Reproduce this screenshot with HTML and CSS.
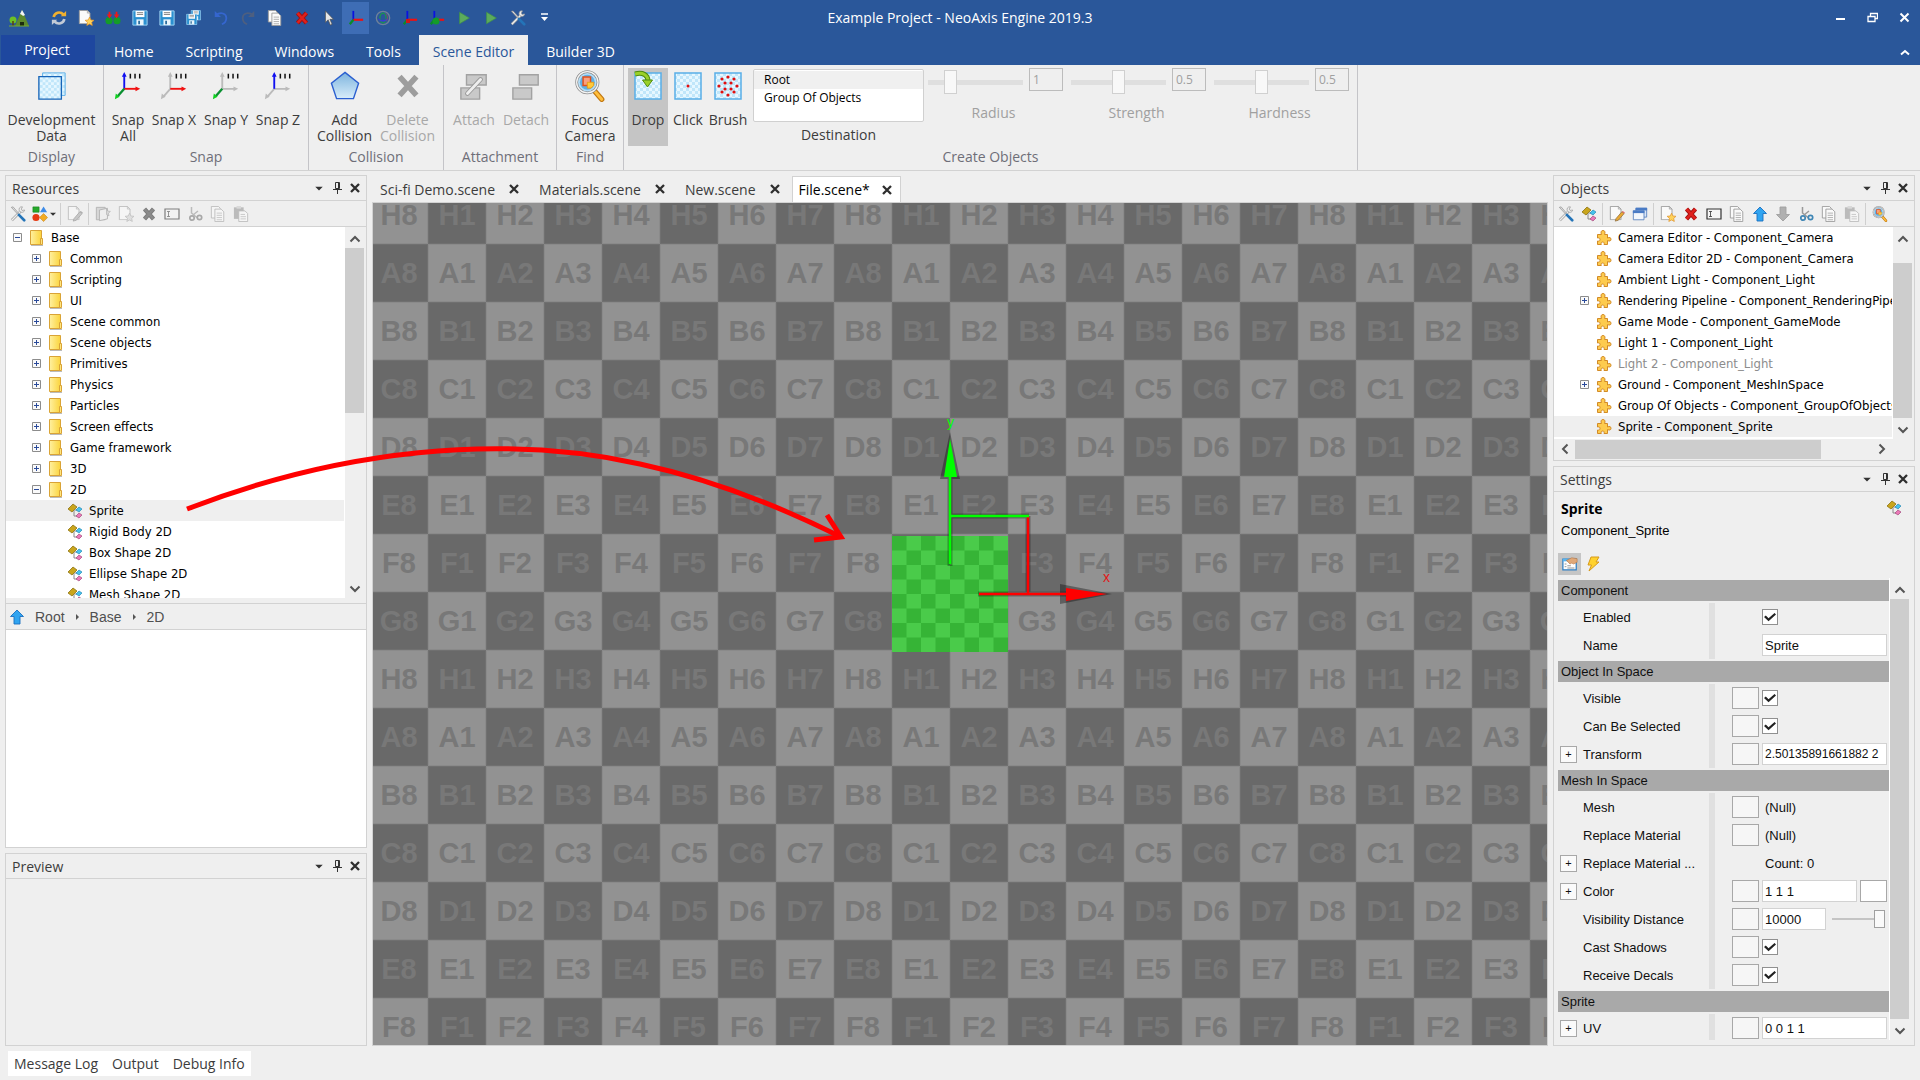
FILE: index.html
```html
<!DOCTYPE html>
<html lang="en">
<head>
    <meta charset="UTF-8">
    <meta name="viewport" content="width=device-width, initial-scale=1.0">
    <title>Example Project - NeoAxis Engine 2019.3</title>
    <link rel="stylesheet" href="styles.css">
</head>
<body>

<!-- Shared icons -->
<svg class="sprites" aria-hidden="true">
    <defs>
        <linearGradient id="folder-fill" x1="0" x2="1"><stop offset="0" stop-color="#fff0a0"/><stop offset="1" stop-color="#fbd43c"/></linearGradient>
        <linearGradient id="blue-fill" x1="0" y1="0" x2="0" y2="1"><stop offset="0" stop-color="#7db4de"/><stop offset="1" stop-color="#d8edfa"/></linearGradient>
        <pattern id="soft-checker" width="6" height="6" patternUnits="userSpaceOnUse"><rect width="6" height="6" fill="#e6f7ff"/><path d="M0 0h3v3H0zM3 3h3v3H3z" fill="#c0e6fa"/></pattern>
        <pattern id="sprite-checker" x="9" y="123" width="29" height="29" patternUnits="userSpaceOnUse"><rect width="29" height="29" fill="#4acb4a"/><path d="M0 0h14.5v14.5H0zM14.5 14.5h14.5v14.5H14.5z" fill="#36b436"/></pattern>
    </defs>
    <symbol id="i-folder" viewBox="0 0 16 16"><path d="M2 15.5h12" stroke="#bbb"/><path d="M1.500 .5h11v14h-11z" fill="url(#folder-fill)" stroke="#d9a336"/><path d="M11.500 8.500h2v6h-2z" fill="#ffe680" stroke="#d9a336"/></symbol>
    <symbol id="i-class" viewBox="0 0 16 16"><path d="M7 7v6h4M8 7h4" fill="none" stroke="#8a8a8a"/><path d="M1 6l5-5 4 3-5 5z" fill="#c9a51c" stroke="#8d7412" stroke-width=".8"/><path d="M9 7l3-3 3 2-3 3z" fill="#45c3ee" stroke="#2a8ab5" stroke-width=".7"/><path d="M9 13l3-3 3 2-3 3z" fill="#ec79b8" stroke="#a34b7e" stroke-width=".7"/></symbol>
    <symbol id="i-puzzle" viewBox="0 0 16 16"><path d="M1.500 4.500h4c-1-2-.5-4 1.500-4s2.500 2 1.500 4h3v3.500c2-1 3.500-.5 3.500 1.300s-1.500 2.200-3.500 1.200v4h-3.500c.5-1.500 0-2.500-1.300-2.500s-2 1-1.400 2.500H1.500v-3.500c1.500.4 2.500-.2 2.500-1.500s-1-1.900-2.500-1.500z" fill="#fdcb4e" stroke="#d28a26"/></symbol>
    <symbol id="i-tools" viewBox="0 0 18 18"><path d="M2 16L12 6" stroke="#999" stroke-width="3"/><path d="M2 16L12 6" stroke="#eee" stroke-width="1.500"/><path d="M16.500 4.500l-3 .5-.8-1.500L14 1c-3-.7-4.500 2-3.500 4.500 2 2.500 5.500 2 6-1z" fill="#eee" stroke="#999" stroke-width=".8"/><path d="M1.500 1.500l2-.5 6 7-1 1z" fill="#ddd" stroke="#888" stroke-width=".7"/><path d="M10 10l6 6" stroke="#2474b8" stroke-width="3" stroke-linecap="round"/></symbol>
    <symbol id="i-shapes" viewBox="0 0 18 18"><path d="M1 1h7v6H1z" fill="#25a92b" stroke="#157a1b" stroke-width=".6"/><path d="M13 .5L17 7H9z" fill="#3d8be8"/><circle cx="4.500" cy="13" r="4" fill="#e63a12"/><path d="M13 8.500l4.500 4.500-4.500 4.500L8.500 13z" fill="#f3ab22" stroke="#c27f13" stroke-width=".6"/></symbol>
    <symbol id="i-page" viewBox="0 0 16 16"><path d="M1.500.5h9l3 3v12h-12z" fill="#fafafa" stroke="#999"/><path d="M10.500.5v3h3z" fill="#ddd" stroke="#999" stroke-width=".7"/></symbol>
    <symbol id="i-pagestar" viewBox="0 0 18 18"><use href="#i-page" width="16" height="16"/><path d="M13 8l1.500 3.200 3.500.4-2.600 2.300.7 3.500-3.100-1.700-3.100 1.700.7-3.500L8 11.600l3.500-.4z" fill="#ffd25a" stroke="#e0922a" stroke-width=".8"/></symbol>
    <symbol id="i-edit" viewBox="0 0 18 18"><use href="#i-page" width="16" height="16"/><path d="M8 14l6.500-7.500 2.500 2L10.500 16 7 17z" fill="#eaa934" stroke="#8a6a3a" stroke-width=".8"/><path d="M14.500 6.500l1-1 2.500 2-1 1z" fill="#e06666"/></symbol>
    <symbol id="i-copy" viewBox="0 0 18 18"><path d="M1.500.5h8l2 2v11h-10z" fill="#fafafa" stroke="#999"/><path d="M5.500 3.500h7l3 3v11h-10z" fill="#fafafa" stroke="#999"/><path d="M7.500 8h6M7.500 10.500h6M7.500 13h6M7.500 15.500h6" stroke="#aaa"/></symbol>
    <symbol id="i-paste" viewBox="0 0 18 18"><path d="M1 1.500h11v13H1z" fill="#999"/><path d="M4 0h5v3H4z" fill="#ccc"/><path d="M6.500 5.500h7l3 3v9h-10z" fill="#fafafa" stroke="#999"/><path d="M8.500 9.500h5M8.500 12h6M8.500 14.500h6" stroke="#aaa"/></symbol>
    <symbol id="i-del" viewBox="0 0 16 16"><path d="M3.500 3l9 10M12.500 3l-9 10" stroke="#a3100f" stroke-width="4.200"/><path d="M3.500 3l9 10M12.500 3l-9 10" stroke="#e0201c" stroke-width="2.600"/></symbol>
    <symbol id="i-rename" viewBox="0 0 16 16"><path d="M1 3h14v10H1z" fill="#f4f4f4" stroke="#333" stroke-width="1.200"/><path d="M3 5.500h3M3 10.500h3M4.500 5.500v5" stroke="#333" stroke-width=".8"/></symbol>
    <symbol id="i-cut" viewBox="0 0 16 16"><path d="M4.500 1v6l6 5M11 5L6 9" fill="none" stroke="#999" stroke-width="1.500"/><circle cx="5" cy="12" r="2.200" fill="none" stroke="#3f86b5" stroke-width="1.700"/><circle cx="12.500" cy="11.500" r="2.200" fill="none" stroke="#3f86b5" stroke-width="1.700"/></symbol>
    <symbol id="i-up" viewBox="0 0 16 16"><path d="M8 1l6.500 6.500H11V15H5V7.500H1.500z" fill="#30a4f0" stroke="#1a6fc0" stroke-width=".9"/></symbol>
    <symbol id="i-down" viewBox="0 0 16 16"><path d="M8 15L1.500 8.500H5V1h6v7.500h3.500z" fill="#b0b0b0" stroke="#a0a0a0" stroke-width=".9"/></symbol>
    <symbol id="i-windows" viewBox="0 0 18 18"><path d="M4.500 2.500h12v10h-12z" fill="#dbe7f7" stroke="#5b83c0"/><path d="M4 2h13v3H4z" fill="#4a7bc5"/><path d="M1.500 5.500h12v10h-12z" fill="#f3f7fc" stroke="#5b83c0"/><path d="M1 5h13v3H1z" fill="#4a7bc5"/></symbol>
    <symbol id="i-find" viewBox="0 0 28 30"><path d="M18.500 20l6.500 7.500" stroke="#c27812" stroke-width="5" stroke-linecap="round"/><path d="M19 20.500l6 7" stroke="#ffbe3c" stroke-width="2.800" stroke-linecap="round"/><circle cx="11.500" cy="11.500" r="10" fill="#b4dcf5" stroke="#8a8a8a" stroke-width="2.600"/><circle cx="11.500" cy="11.500" r="10" fill="none" stroke="#f4f4f4" stroke-width="1.200"/><circle cx="11.500" cy="11.500" r="7" fill="#5fb0e6"/><path d="M7.500 6.500h7v8h-7z" fill="#f8a080" stroke="#e0501c" stroke-width="1.400"/><path d="M11.500 11.500h6v3l-2.500 2.500h-3.500z" fill="#ffc93a" stroke="#e89a10" stroke-width=".8"/></symbol>
    <symbol id="i-save" viewBox="0 0 18 18"><path d="M1 1h16v16H1z" fill="#2b90d0" stroke="#a8dcf8"/><path d="M4 1h10v7H4z" fill="#fff"/><path d="M5.500 3h7M5.500 5h7" stroke="#777"/><path d="M5 10.500h8V17H5z" fill="#e8f4fb"/><path d="M7 12h2v4H7z" fill="#2b6c9c"/></symbol>
    <symbol id="i-saveall" viewBox="0 0 18 18"><use href="#i-save" x="5" width="12" height="12"/><use href="#i-save" y="4" width="13" height="13"/></symbol>
    <symbol id="i-gizmo" viewBox="0 0 18 18"><path d="M6 1v11" stroke="#0a12e0" stroke-width="2"/><path d="M6 11h11" stroke="#f01010" stroke-width="2.400"/><path d="M6 11l-4 5" stroke="#0b8a2a" stroke-width="2.600"/></symbol>
    <symbol id="i-play" viewBox="0 0 18 18"><path d="M4 2.500l11 6.500-11 6.500z" fill="#5cab5c" stroke="#3f9148" stroke-width=".8"/></symbol>
    <symbol id="i-undo" viewBox="0 0 18 18"><path d="M3 6c6-4.500 12-2 12 3 0 4-2 6-5 7" fill="none" stroke="#3566cf" stroke-width="2"/><path d="M2 1v7h7z" fill="#3566cf"/></symbol>
    <symbol id="i-min-arrow" viewBox="0 0 9 6"><path d="M0 1h9L4.500 5.500z" fill="#333"/></symbol>
    <symbol id="i-pin" viewBox="0 0 9 13"><path d="M2.500.5h4v6h-4zM5.500.5v6M0 7.500h9M4.500 7.500V12" fill="none" stroke="#333"/></symbol>
    <symbol id="i-x" viewBox="0 0 10 10"><path d="M1 1l8 8M9 1L1 9" stroke="#2e2e2e" stroke-width="2.300"/></symbol>
    <symbol id="i-cup" viewBox="0 0 12 8"><path d="M1.500 6.500L6 2l4.500 4.500" fill="none" stroke="#555" stroke-width="2"/></symbol>
    <symbol id="i-cdown" viewBox="0 0 12 8"><path d="M1.500 1.500L6 6l4.500-4.500" fill="none" stroke="#555" stroke-width="2"/></symbol>
    <symbol id="i-plus" viewBox="0 0 9 9"><path d="M.5.5h8v8h-8z" fill="#fafafa" stroke="#8c8c8c"/><path d="M2 4.500h5M4.500 2v5" stroke="#2a4a9a"/></symbol>
    <symbol id="i-minus" viewBox="0 0 9 9"><path d="M.5.5h8v8h-8z" fill="#fafafa" stroke="#8c8c8c"/><path d="M2 4.500h5" stroke="#2a4a9a"/></symbol>
    <symbol id="i-tile" viewBox="0 0 28 32"><path d="M1 3h26v26H1z" fill="url(#soft-checker)" stroke="#58aee8" stroke-width="1.500"/></symbol>
</svg>

<header class="titlebar">
    <div class="quick">
        <button class="qb logo" title="NeoAxis"><svg viewBox="0 0 20 18"><path d="M6 17L13 1l7 16z" fill="#5d8a2e"/><path d="M11 5l2-4 3 5-2 1-1-1z" fill="#f4f4f4"/><circle cx="4" cy="11" r="3.500" fill="#6cc024"/><path d="M4 12v5" stroke="#5a3a12" stroke-width="1.500"/><path d="M11 17v-4h4v4z" fill="#1c2c10"/><path d="M0 16.500h20v1H0z" fill="#77ad30"/></svg></button>
        <button class="qb" title="Refresh"><svg viewBox="0 0 18 18"><path d="M3 8c1-5 7-7 11-3" fill="none" stroke="#f0b030" stroke-width="3"/><path d="M11 7h6V1z" fill="#f0b030"/><path d="M15 10c-1 5-7 7-11 3" fill="none" stroke="#c2cad6" stroke-width="3"/><path d="M7 11H1v6z" fill="#c2cad6"/></svg></button>
        <button class="qb" title="New"><svg><use href="#i-pagestar"/></svg></button>
        <button class="qb" title="Import"><svg viewBox="0 0 18 18"><path d="M5 2v5M13 2v5" stroke="#f01818" stroke-width="2"/><circle cx="4.500" cy="12" r="4" fill="#149c28"/><circle cx="13.500" cy="12" r="4" fill="#149c28"/><path d="M2 5h6l-3 4.500zM10 5h6l-3 4.500z" fill="#f01818"/></svg></button>
        <button class="qb" title="Save"><svg><use href="#i-save"/></svg></button>
        <button class="qb" title="Save as"><svg><use href="#i-save"/></svg></button>
        <button class="qb" title="Save all"><svg><use href="#i-saveall"/></svg></button>
        <button class="qb" title="Undo"><svg><use href="#i-undo"/></svg></button>
        <button class="qb" title="Redo"><svg viewBox="0 0 18 18"><path d="M15 6C9 1.500 3 4 3 9c0 4 2 6 5 7" fill="none" stroke="#4d5f80" stroke-width="2"/><path d="M16 1v7H9z" fill="#4d5f80"/></svg></button>
        <button class="qb" title="Duplicate"><svg><use href="#i-copy"/></svg></button>
        <button class="qb" title="Delete"><svg><use href="#i-del"/></svg></button>
        <button class="qb" title="Select"><svg viewBox="0 0 18 18"><path d="M5 1v13l3-3 2.500 6 2-1L10 10.500h4z" fill="#e6e6e6" stroke="#555" stroke-width=".8"/></svg></button>
        <button class="qb active" title="Move"><svg><use href="#i-gizmo"/></svg></button>
        <button class="qb" title="Rotate"><svg viewBox="0 0 18 18"><circle cx="9" cy="9" r="7.500" fill="none" stroke="#6f8199" stroke-width="1.500"/><ellipse cx="9" cy="9" rx="3.500" ry="5.500" fill="none" stroke="#1b9a4a" stroke-width="1.300"/><path d="M4 10c2 3 8 3 10 0" fill="none" stroke="#3a3ad8" stroke-width="1.300"/><path d="M12 4c2 2 3 5 1 8" fill="none" stroke="#8b4a6a"/></svg></button>
        <button class="qb" title="Scale"><svg><use href="#i-gizmo"/><rect x="4" y="9" width="4" height="4" fill="#d01818"/></svg></button>
        <button class="qb" title="Transform"><svg><use href="#i-gizmo"/><circle cx="7" cy="11" r="3.500" fill="#149c28"/></svg></button>
        <button class="qb" title="Play"><svg><use href="#i-play"/></svg></button>
        <button class="qb" title="Run device"><svg><use href="#i-play"/></svg></button>
        <button class="qb" title="Tools"><svg><use href="#i-tools"/></svg></button>
        <button class="qb customize" title="Customize"><svg viewBox="0 0 9 9"><path d="M1 1h7" stroke="#fff" stroke-width="1.500"/><path d="M1 4h7L4.500 8z" fill="#fff"/></svg></button>
    </div>
    <h1 class="app-title">Example Project - NeoAxis Engine 2019.3</h1>
    <div class="window-buttons">
        <button title="Minimize"><svg viewBox="0 0 11 11"><path d="M1 7h9" stroke="#fff" stroke-width="2"/></svg></button>
        <button title="Restore"><svg viewBox="0 0 11 11"><path d="M1 4.500h7v5H1zM3.500 4V1.500h7v5H8" fill="none" stroke="#fff" stroke-width="1.300"/></svg></button>
        <button title="Close"><svg viewBox="0 0 11 11"><path d="M1.500 1.500l8 8M9.500 1.500l-8 8" stroke="#fff" stroke-width="2"/></svg></button>
    </div>
</header>

<nav class="ribbon-tabs">
    <a href="#" class="project">Project</a>
    <a href="#">Home</a>
    <a href="#">Scripting</a>
    <a href="#">Windows</a>
    <a href="#">Tools</a>
    <a href="#" class="selected">Scene Editor</a>
    <a href="#">Builder 3D</a>
    <button class="collapse" title="Collapse ribbon"><svg viewBox="0 0 10 7"><path d="M1 5.500l4-3.500 4 3.500" fill="none" stroke="#fff" stroke-width="2"/></svg></button>
</nav>

<section class="ribbon">
    <div class="group g-display">
        <div class="items"><button class="rb"><svg viewBox="0 0 32 32"><path d="M6 2h24v24H6z" fill="url(#soft-checker)" stroke="#58aee8"/><path d="M2 6h24v24H2z" fill="url(#soft-checker)" stroke="#1664b8" stroke-width="1.400"/></svg><span>Development<br>Data</span></button></div>
        <div class="caption">Display</div>
    </div>
    <div class="group g-snap">
        <div class="items">
            <button class="rb"><svg viewBox="0 0 32 32"><path d="M12 19V4" stroke="#1010f0" stroke-width="2"/><path d="M9.500 6L12 1l2.500 5z" fill="#1010f0"/><path d="M12 19h13" stroke="#f01010" stroke-width="2"/><path d="M24 16.500l5 2.500-5 2.500z" fill="#f01010"/><path d="M12 19l-7 8" stroke="#0a9030" stroke-width="2.500"/><path d="M2 30l1-6 4 3.500z" fill="#10d020"/><path d="M18.500 3v5M23.500 3v5M28.500 3v5" stroke="#111" stroke-width="1.600"/></svg><span>Snap<br>All</span></button>
            <button class="rb"><svg viewBox="0 0 32 32"><path d="M12 19V4M12 19l-7 8" stroke="#bbb" stroke-width="2"/><path d="M9.500 6L12 1l2.500 5zM2 30l1-6 4 3.500z" fill="#bbb"/><path d="M12 19h13" stroke="#f01010" stroke-width="2"/><path d="M24 16.500l5 2.500-5 2.500z" fill="#f01010"/><path d="M18.500 3v5M23.500 3v5M28.500 3v5" stroke="#111" stroke-width="1.600"/></svg><span>Snap X</span></button>
            <button class="rb"><svg viewBox="0 0 32 32"><path d="M12 19V4M12 19h13" stroke="#bbb" stroke-width="2"/><path d="M9.500 6L12 1l2.500 5zM24 16.500l5 2.500-5 2.500z" fill="#bbb"/><path d="M12 19l-7 8" stroke="#0a9030" stroke-width="2.500"/><path d="M2 30l1-6 4 3.500z" fill="#10d020"/><path d="M18.500 3v5M23.500 3v5M28.500 3v5" stroke="#111" stroke-width="1.600"/></svg><span>Snap Y</span></button>
            <button class="rb"><svg viewBox="0 0 32 32"><path d="M12 19h13M12 19l-7 8" stroke="#bbb" stroke-width="2"/><path d="M24 16.500l5 2.500-5 2.500zM2 30l1-6 4 3.500z" fill="#bbb"/><path d="M12 19V4" stroke="#1010f0" stroke-width="2"/><path d="M9.500 6L12 1l2.500 5z" fill="#1010f0"/><path d="M18.500 3v5M23.500 3v5M28.500 3v5" stroke="#111" stroke-width="1.600"/></svg><span>Snap Z</span></button>
        </div>
        <div class="caption">Snap</div>
    </div>
    <div class="group g-collision">
        <div class="items">
            <button class="rb"><svg viewBox="0 0 32 32"><path d="M16 1.500L30.500 13 25 29.500H7L1.500 13z" fill="url(#blue-fill)" stroke="#2a5fd0" stroke-width="1.500"/></svg><span>Add<br>Collision</span></button>
            <button class="rb" disabled><svg viewBox="0 0 32 32"><path d="M7 6l18 20M25 6L7 26" stroke="#9d9d9d" stroke-width="6"/></svg><span>Delete<br>Collision</span></button>
        </div>
        <div class="caption">Collision</div>
    </div>
    <div class="group g-attach">
        <div class="items">
            <button class="rb" disabled><svg viewBox="0 0 32 32"><path d="M8 4h21v11H8zM2 18h20v12H2z" fill="#c9c9c9" stroke="#a2a2a2" stroke-width="1.500"/><path d="M9 24L23 9" stroke="#999" stroke-width="5" stroke-linecap="round"/><path d="M9 24L23 9" stroke="#eee" stroke-width="3" stroke-linecap="round"/></svg><span>Attach</span></button>
            <button class="rb" disabled><svg viewBox="0 0 32 32"><path d="M9 4h20v11H9zM2 18h20v12H2z" fill="#c9c9c9" stroke="#a2a2a2" stroke-width="1.500"/></svg><span>Detach</span></button>
        </div>
        <div class="caption">Attachment</div>
    </div>
    <div class="group g-find">
        <div class="items"><button class="rb"><svg><use href="#i-find"/></svg><span>Focus<br>Camera</span></button></div>
        <div class="caption">Find</div>
    </div>
    <div class="group g-create">
        <div class="items">
            <button class="rb pressed"><svg viewBox="0 0 28 32"><use href="#i-tile"/><path d="M1 4c8-2 13 1 13 7" fill="none" stroke="#4d8a10" stroke-width="5"/><path d="M1 4c8-2 13 1 13 7" fill="none" stroke="#9ad028" stroke-width="3"/><path d="M8.500 10h10l-5 7z" fill="#9ad028" stroke="#4d8a10"/></svg><span>Drop</span></button>
            <button class="rb"><svg viewBox="0 0 28 32"><use href="#i-tile"/><circle cx="14" cy="16" r="1.500" fill="#e01010"/></svg><span>Click</span></button>
            <button class="rb"><svg viewBox="0 0 28 32"><use href="#i-tile"/><g fill="#e01010"><circle cx="14" cy="7" r="1.600"/><circle cx="14" cy="25" r="1.600"/><circle cx="5" cy="16" r="1.600"/><circle cx="23" cy="16" r="1.600"/><circle cx="8" cy="9" r="1.600"/><circle cx="20" cy="9" r="1.600"/><circle cx="8" cy="22" r="1.600"/><circle cx="20" cy="22" r="1.600"/><circle cx="11" cy="13" r="1.600"/><circle cx="17" cy="13" r="1.600"/><circle cx="11" cy="19" r="1.600"/><circle cx="17" cy="19" r="1.600"/></g></svg><span>Brush</span></button>
            <div class="destination">
                <select id="destination" size="2">
                    <option selected>Root</option>
                    <option>Group Of Objects</option>
                </select>
                <label for="destination">Destination</label>
            </div>
            <div class="param">
                <div class="param-row"><input type="range" id="radius" min="0" max="10" value="2" disabled><input type="text" value="1" aria-label="Radius value" disabled></div>
                <label for="radius">Radius</label>
            </div>
            <div class="param">
                <div class="param-row"><input type="range" id="strength" min="0" max="10" value="5" disabled><input type="text" value="0.5" aria-label="Strength value" disabled></div>
                <label for="strength">Strength</label>
            </div>
            <div class="param">
                <div class="param-row"><input type="range" id="hardness" min="0" max="10" value="5" disabled><input type="text" value="0.5" aria-label="Hardness value" disabled></div>
                <label for="hardness">Hardness</label>
            </div>
        </div>
        <div class="caption">Create Objects</div>
    </div>
</section>

<main class="workspace">

    <div class="dock">
        <section class="panel resources">
            <div class="panel-head">
                <h2>Resources</h2>
                <button title="Options"><svg class="arr"><use href="#i-min-arrow"/></svg></button>
                <button title="Pin"><svg class="pin"><use href="#i-pin"/></svg></button>
                <button title="Close"><svg class="x"><use href="#i-x"/></svg></button>
            </div>
            <div class="toolbar">
                <button title="Options"><svg><use href="#i-tools"/></svg></button>
                <button class="wide" title="Display mode"><svg><use href="#i-shapes"/></svg><svg class="caret"><use href="#i-min-arrow"/></svg></button>
                <span class="sep"></span>
                <button title="Edit" disabled><svg><use href="#i-edit"/></svg></button>
                <span class="sep"></span>
                <button title="New folder" disabled><svg viewBox="0 0 18 18"><path d="M1.500 1.500h10v14h-10z" fill="#c8c8c8" stroke="#888"/><path d="M5 4.500l9-2v12l-9 2z" fill="#eee" stroke="#888"/><path d="M13 3l1.300 2.700 3 .4-2.200 2 .6 3-2.700-1.500z" fill="#ccc" stroke="#888" stroke-width=".8"/></svg></button>
                <button title="New resource" disabled><svg><use href="#i-pagestar"/></svg></button>
                <button title="Delete" disabled><svg><use href="#i-del"/></svg></button>
                <button title="Rename" disabled><svg><use href="#i-rename"/></svg></button>
                <button title="Cut" disabled><svg><use href="#i-cut"/></svg></button>
                <button title="Copy" disabled><svg><use href="#i-copy"/></svg></button>
                <button title="Paste" disabled><svg><use href="#i-paste"/></svg></button>
            </div>
            <div class="scroll-area">
                <ul class="tree">
                    <li class="l0"><svg class="exp"><use href="#i-minus"/></svg><svg class="ico"><use href="#i-folder"/></svg>Base</li>
                    <li class="l1"><svg class="exp"><use href="#i-plus"/></svg><svg class="ico"><use href="#i-folder"/></svg>Common</li>
                    <li class="l1"><svg class="exp"><use href="#i-plus"/></svg><svg class="ico"><use href="#i-folder"/></svg>Scripting</li>
                    <li class="l1"><svg class="exp"><use href="#i-plus"/></svg><svg class="ico"><use href="#i-folder"/></svg>UI</li>
                    <li class="l1"><svg class="exp"><use href="#i-plus"/></svg><svg class="ico"><use href="#i-folder"/></svg>Scene common</li>
                    <li class="l1"><svg class="exp"><use href="#i-plus"/></svg><svg class="ico"><use href="#i-folder"/></svg>Scene objects</li>
                    <li class="l1"><svg class="exp"><use href="#i-plus"/></svg><svg class="ico"><use href="#i-folder"/></svg>Primitives</li>
                    <li class="l1"><svg class="exp"><use href="#i-plus"/></svg><svg class="ico"><use href="#i-folder"/></svg>Physics</li>
                    <li class="l1"><svg class="exp"><use href="#i-plus"/></svg><svg class="ico"><use href="#i-folder"/></svg>Particles</li>
                    <li class="l1"><svg class="exp"><use href="#i-plus"/></svg><svg class="ico"><use href="#i-folder"/></svg>Screen effects</li>
                    <li class="l1"><svg class="exp"><use href="#i-plus"/></svg><svg class="ico"><use href="#i-folder"/></svg>Game framework</li>
                    <li class="l1"><svg class="exp"><use href="#i-plus"/></svg><svg class="ico"><use href="#i-folder"/></svg>3D</li>
                    <li class="l1"><svg class="exp"><use href="#i-minus"/></svg><svg class="ico"><use href="#i-folder"/></svg>2D</li>
                    <li class="l2 current"><svg class="ico"><use href="#i-class"/></svg>Sprite</li>
                    <li class="l2"><svg class="ico"><use href="#i-class"/></svg>Rigid Body 2D</li>
                    <li class="l2"><svg class="ico"><use href="#i-class"/></svg>Box Shape 2D</li>
                    <li class="l2"><svg class="ico"><use href="#i-class"/></svg>Ellipse Shape 2D</li>
                    <li class="l2"><svg class="ico"><use href="#i-class"/></svg>Mesh Shape 2D</li>
                </ul>
                <div class="vscroll">
                    <button title="Scroll up"><svg><use href="#i-cup"/></svg></button>
                    <div class="track"><div class="thumb thumb-res"></div></div>
                    <button title="Scroll down"><svg><use href="#i-cdown"/></svg></button>
                </div>
            </div>
            <div class="breadcrumbs">
                <svg class="ico"><use href="#i-up"/></svg>
                <a href="#">Root</a><span class="crumb"></span><a href="#">Base</a><span class="crumb"></span><a href="#">2D</a>
            </div>
            <div class="file-list"></div>
        </section>

        <section class="panel preview">
            <div class="panel-head">
                <h2>Preview</h2>
                <button title="Options"><svg class="arr"><use href="#i-min-arrow"/></svg></button>
                <button title="Pin"><svg class="pin"><use href="#i-pin"/></svg></button>
                <button title="Close"><svg class="x"><use href="#i-x"/></svg></button>
            </div>
        </section>
    </div>

    <div class="documents">
        <div class="doc-tabs">
            <div class="doc-tab"><a href="#">Sci-fi Demo.scene</a><button title="Close"><svg class="x"><use href="#i-x"/></svg></button></div>
            <div class="doc-tab"><a href="#">Materials.scene</a><button title="Close"><svg class="x"><use href="#i-x"/></svg></button></div>
            <div class="doc-tab"><a href="#">New.scene</a><button title="Close"><svg class="x"><use href="#i-x"/></svg></button></div>
            <div class="doc-tab open"><a href="#">File.scene*</a><button title="Close"><svg class="x"><use href="#i-x"/></svg></button></div>
        </div>
        <div class="scene">
            <div class="floor" id="floor"></div>
            <svg class="gizmo" viewBox="0 0 240 240" width="240" height="240">
                <rect x="9" y="123" width="116" height="116" fill="url(#sprite-checker)"/>
                <g stroke="#000" stroke-opacity=".3" fill="none" stroke-width="5"><path d="M67 153V66M67 103h79M145 103v80M95 181h90"/></g>
                <path d="M67 19L57 66h20zM229 181l-52-10v20z" fill="#000" fill-opacity=".35"/>
                <path d="M67 151V62" stroke="#0f0" stroke-width="2.500"/>
                <path d="M67 26L61 64h13z" fill="#0f0"/>
                <path d="M145 103v77" stroke="#f00" stroke-width="2.500"/>
                <path d="M67 103h79" stroke="#0f0" stroke-width="2.500"/>
                <path d="M96 181h90" stroke="#f00" stroke-width="2.500"/>
                <path d="M224 181l-41-6v13z" fill="#f00"/>
                <text x="64" y="14" fill="#0f0">y</text>
                <text x="220" y="169" fill="#e01818">x</text>
            </svg>
        </div>
    </div>

    <div class="dock">
        <section class="panel objects">
            <div class="panel-head">
                <h2>Objects</h2>
                <button title="Options"><svg class="arr"><use href="#i-min-arrow"/></svg></button>
                <button title="Pin"><svg class="pin"><use href="#i-pin"/></svg></button>
                <button title="Close"><svg class="x"><use href="#i-x"/></svg></button>
            </div>
            <div class="toolbar">
                <button title="Options"><svg><use href="#i-tools"/></svg></button>
                <button title="Show types"><svg><use href="#i-class"/></svg></button>
                <span class="sep"></span>
                <button title="Edit"><svg><use href="#i-edit"/></svg></button>
                <button title="Settings window"><svg><use href="#i-windows"/></svg></button>
                <span class="sep"></span>
                <button title="New object"><svg><use href="#i-pagestar"/></svg></button>
                <button title="Delete"><svg><use href="#i-del"/></svg></button>
                <button title="Rename"><svg><use href="#i-rename"/></svg></button>
                <button title="Clone"><svg><use href="#i-copy"/></svg></button>
                <button title="Move up"><svg><use href="#i-up"/></svg></button>
                <button title="Move down"><svg><use href="#i-down"/></svg></button>
                <button title="Cut"><svg><use href="#i-cut"/></svg></button>
                <button title="Copy"><svg><use href="#i-copy"/></svg></button>
                <button title="Paste" disabled><svg><use href="#i-paste"/></svg></button>
                <span class="sep"></span>
                <button title="Find"><svg><use href="#i-find"/></svg></button>
            </div>
            <div class="scroll-area">
                <ul class="tree">
                    <li class="o1"><svg class="ico"><use href="#i-puzzle"/></svg>Camera Editor - Component_Camera</li>
                    <li class="o1"><svg class="ico"><use href="#i-puzzle"/></svg>Camera Editor 2D - Component_Camera</li>
                    <li class="o1"><svg class="ico"><use href="#i-puzzle"/></svg>Ambient Light - Component_Light</li>
                    <li class="o0"><svg class="exp"><use href="#i-plus"/></svg><svg class="ico"><use href="#i-puzzle"/></svg>Rendering Pipeline - Component_RenderingPipeline</li>
                    <li class="o1"><svg class="ico"><use href="#i-puzzle"/></svg>Game Mode - Component_GameMode</li>
                    <li class="o1"><svg class="ico"><use href="#i-puzzle"/></svg>Light 1 - Component_Light</li>
                    <li class="o1 off"><svg class="ico"><use href="#i-puzzle"/></svg>Light 2 - Component_Light</li>
                    <li class="o0"><svg class="exp"><use href="#i-plus"/></svg><svg class="ico"><use href="#i-puzzle"/></svg>Ground - Component_MeshInSpace</li>
                    <li class="o1"><svg class="ico"><use href="#i-puzzle"/></svg>Group Of Objects - Component_GroupOfObjects</li>
                    <li class="o1 current"><svg class="ico"><use href="#i-puzzle"/></svg>Sprite - Component_Sprite</li>
                </ul>
                <div class="vscroll">
                    <button title="Scroll up"><svg><use href="#i-cup"/></svg></button>
                    <div class="track"><div class="thumb thumb-obj"></div></div>
                    <button title="Scroll down"><svg><use href="#i-cdown"/></svg></button>
                </div>
            </div>
            <div class="hscroll">
                <button title="Scroll left"><svg viewBox="0 0 8 12"><path d="M6.500 1.500L2 6l4.500 4.500" fill="none" stroke="#555" stroke-width="2"/></svg></button>
                <div class="track"><div class="thumb"></div></div>
                <button title="Scroll right"><svg viewBox="0 0 8 12"><path d="M1.500 1.500L6 6l-4.500 4.500" fill="none" stroke="#555" stroke-width="2"/></svg></button>
            </div>
        </section>

        <section class="panel settings">
            <div class="panel-head">
                <h2>Settings</h2>
                <button title="Options"><svg class="arr"><use href="#i-min-arrow"/></svg></button>
                <button title="Pin"><svg class="pin"><use href="#i-pin"/></svg></button>
                <button title="Close"><svg class="x"><use href="#i-x"/></svg></button>
            </div>
            <div class="subject">
                <div>
                    <h3>Sprite</h3>
                    <p>Component_Sprite</p>
                </div>
                <svg class="ico"><use href="#i-class"/></svg>
            </div>
            <div class="modes">
                <button class="on" title="Properties"><svg viewBox="0 0 18 16"><path d="M1 2.500h15v12H1z" fill="#fff" stroke="#2f7fc4" stroke-width="1.400"/><path d="M1 2h7v3H1z" fill="#59b4ee"/><path d="M5 4l6-3 6 1v4l-4 2-2-1-2 1z" fill="#e0a878" stroke="#b4703a" stroke-width=".6"/><path d="M3 8h2M3 11h2M6 10h4M6 12.500h8" stroke="#888"/></svg></button>
                <button title="Events"><svg viewBox="0 0 16 16"><path d="M6 1h8l-3 5h3L4 15l2.500-6H3z" fill="#ffd22e" stroke="#d79a1c"/></svg></button>
            </div>
            <div class="scroll-area props-area">
                <form class="props">
                    <h4>Component</h4>
                    <div class="rows">
                        <div class="row"><label for="p-enabled">Enabled</label><i></i><input class="value" type="checkbox" id="p-enabled" checked></div>
                        <div class="row"><label for="p-name">Name</label><i></i><input class="value" type="text" id="p-name" value="Sprite"></div>
                    </div>
                    <h4>Object In Space</h4>
                    <div class="rows">
                        <div class="row"><label for="p-visible">Visible</label><i></i><button type="button" class="def" title="Default"></button><input class="value" type="checkbox" id="p-visible" checked></div>
                        <div class="row"><label for="p-sel">Can Be Selected</label><i></i><button type="button" class="def" title="Default"></button><input class="value" type="checkbox" id="p-sel" checked></div>
                        <div class="row"><button type="button" class="more">+</button><label for="p-tr">Transform</label><i></i><button type="button" class="def" title="Default"></button><input class="value" type="text" id="p-tr" value="2.50135891661882 2"></div>
                    </div>
                    <h4>Mesh In Space</h4>
                    <div class="rows">
                        <div class="row"><span class="name">Mesh</span><i></i><button type="button" class="def" title="Default"></button><span class="value plain">(Null)</span></div>
                        <div class="row"><span class="name">Replace Material</span><i></i><button type="button" class="def" title="Default"></button><span class="value plain">(Null)</span></div>
                        <div class="row"><button type="button" class="more">+</button><span class="name">Replace Material ...</span><i></i><span class="value plain">Count: 0</span></div>
                        <div class="row"><button type="button" class="more">+</button><label for="p-color">Color</label><i></i><button type="button" class="def" title="Default"></button><div class="value pair"><input type="text" id="p-color" value="1 1 1"><button type="button" class="def white" title="Pick color"></button></div></div>
                        <div class="row"><label for="p-vis">Visibility Distance</label><i></i><button type="button" class="def" title="Default"></button><div class="value pair"><input type="text" id="p-vis" value="10000"><input type="range" value="100" aria-label="Visibility Distance"></div></div>
                        <div class="row"><label for="p-shadow">Cast Shadows</label><i></i><button type="button" class="def" title="Default"></button><input class="value" type="checkbox" id="p-shadow" checked></div>
                        <div class="row"><label for="p-decal">Receive Decals</label><i></i><button type="button" class="def" title="Default"></button><input class="value" type="checkbox" id="p-decal" checked></div>
                    </div>
                    <h4>Sprite</h4>
                    <div class="rows">
                        <div class="row"><button type="button" class="more">+</button><label for="p-uv">UV</label><i></i><button type="button" class="def" title="Default"></button><input class="value" type="text" id="p-uv" value="0 0 1 1"></div>
                    </div>
                </form>
                <div class="vscroll">
                    <button title="Scroll up"><svg><use href="#i-cup"/></svg></button>
                    <div class="track"><div class="thumb thumb-set"></div></div>
                    <button title="Scroll down"><svg><use href="#i-cdown"/></svg></button>
                </div>
            </div>
        </section>
    </div>

    <!-- Drag hint: Sprite resource into the scene -->
    <svg class="drag-arrow" width="700" height="140" viewBox="170 420 700 140">
        <path d="M187 509C340 450 500 433 640 464C710 479 775 504 841 537" fill="none" stroke="#f00" stroke-width="5"/>
        <path d="M827 515l14 22-27 3" fill="none" stroke="#f00" stroke-width="5"/>
    </svg>
</main>

<footer class="bottom-bar">
    <nav>
        <a href="#">Message Log</a>
        <a href="#">Output</a>
        <a href="#">Debug Info</a>
    </nav>
</footer>

<script src="floor.js"></script>
</body>
</html>
```

FILE: floor.js
```js
// Fill the scene floor with the 8x8 test texture, repeated
const floor = document.getElementById('floor');
const letters = 'HABCDEFG';
const rows = 15;
const cols = 21;

for (let r = 0; r < rows; r++) {
    for (let c = 0; c < cols; c++) {
        const cell = document.createElement('span');
        cell.className = (r + c) % 2 ? 'dark' : 'light';
        cell.textContent = letters[r % 8] + ((c + 7) % 8 + 1);
        floor.appendChild(cell);
    }
}
```

FILE: styles.css
```css
* {
    box-sizing: border-box;
}
body {
    margin: 0;
    height: 100vh;
    display: flex;
    flex-direction: column;
    overflow: hidden;
    background-color: #efefef;
    color: #3c3c3c;
    font-family: "Open Sans", "Noto Sans", sans-serif;
    font-size: 14px;
}
h1, h2, h3, h4, p, ul {
    margin: 0;
    padding: 0;
    font-weight: normal;
}
button {
    border: 0;
    padding: 0;
    background: none;
    color: inherit;
    font: inherit;
}
a {
    color: inherit;
    text-decoration: none;
}
.sprites {
    position: absolute;
    width: 0;
    height: 0;
}

/* Title bar */
.titlebar {
    display: grid;
    grid-template-columns: 1fr auto 1fr;
    height: 35px;
    align-items: center;
    background-color: #2a579a;
    color: white;
}
.quick {
    display: flex;
    padding-left: 5px;
}
.qb {
    width: 27px;
    height: 32px;
    display: flex;
    align-items: center;
    justify-content: center;
}
.qb svg {
    width: 16px;
    height: 16px;
}
.qb.logo {
    margin-right: 13px;
}
.qb.logo svg {
    width: 20px;
    height: 18px;
}
.qb.active {
    background-color: #3e6db5;
}
.qb.customize svg {
    width: 9px;
    height: 9px;
}
.app-title {
    font-size: 14px;
}
.window-buttons {
    display: flex;
    justify-content: flex-end;
    padding-right: 7px;
}
.window-buttons button {
    width: 32px;
    height: 32px;
}
.window-buttons button:last-child {
    width: 18px;
    margin-left: 7px;
}
.window-buttons svg {
    width: 11px;
    height: 11px;
}

/* Ribbon tabs */
.ribbon-tabs {
    display: flex;
    height: 30px;
    padding-left: 1px;
    background-color: #2a579a;
    color: white;
}
.ribbon-tabs a {
    line-height: 33px;
    padding: 0 14px;
    margin-right: 4px;
}
.ribbon-tabs .project {
    width: 94px;
    padding: 0 2px 0 0;
    margin-right: 5px;
    line-height: 29px;
    text-align: center;
    background-color: #1e479f;
}
.ribbon-tabs .selected {
    background-color: #efefef;
    color: #2a579a;
}
.collapse {
    margin-left: auto;
    width: 30px;
}
.collapse svg {
    width: 10px;
    height: 7px;
}

/* Ribbon */
.ribbon {
    display: flex;
    height: 106px;
    border-bottom: 1px solid #d2d2d2;
}
.group {
    display: flex;
    flex-direction: column;
    padding: 3px 4px 0;
    border-right: 1px solid #c4c4c8;
}
.items {
    display: flex;
    height: 78px;
}
.rb {
    display: flex;
    flex-direction: column;
    align-items: center;
    justify-content: flex-start;
    width: 52px;
    line-height: 16px;
    white-space: nowrap;
}
.rb svg {
    width: 30px;
    height: 32px;
    margin: 2px 0 10px;
    flex-shrink: 0;
}
.rb:disabled {
    color: #a8a8a8;
}
.rb.pressed {
    background-color: #c5c5c5;
}
.caption {
    text-align: center;
    color: #6e6e78;
    line-height: 22px;
}
.g-display {
    width: 104px;
}
.g-display .rb {
    width: 100%;
}
.g-snap .rb:first-child {
    width: 40px;
}
.g-collision .rb {
    width: 63px;
}
.g-find .rb {
    width: 58px;
}
.g-create .rb {
    width: 40px;
}
.g-create .rb svg {
    width: 28px;
}
.destination {
    width: 171px;
    margin-left: 5px;
    display: flex;
    flex-direction: column;
    align-items: center;
    line-height: 26px;
}
.destination select {
    width: 100%;
    height: 53px;
    margin-top: 1px;
    padding: 1px 0 0;
    border: 1px solid #d0d0d0;
    background-color: white;
    font-family: "Open Sans", sans-serif;
    font-size: 12px;
    overflow: hidden;
    outline: 0;
    flex-shrink: 0;
}
.destination option {
    min-height: 18px;
    line-height: 18px;
    padding: 0 5px 0 10px;
    color: black;
}
.destination option:checked {
    background: #f0f0f0 linear-gradient(#f0f0f0, #f0f0f0);
    color: black;
}
.param {
    width: 143px;
    padding-left: 4px;
    color: #a0a0a0;
}
.param label {
    display: block;
    width: 131px;
    text-align: center;
    line-height: 20px;
    margin-top: 11px;
}
.param-row {
    display: flex;
    justify-content: space-between;
    height: 24px;
    padding-right: 4px;
}
.param-row input[type=text] {
    width: 34px;
    height: 23px;
    padding: 0 3px;
    border: 1px solid #bcbcbc;
    background-color: #efefef;
    color: #a0a0a0;
    font-family: "Open Sans", sans-serif;
    font-size: 12px;
}
input[type=range] {
    appearance: none;
    margin: 0;
    background: none;
}
.param-row input[type=range] {
    width: 95px;
    height: 24px;
    margin-top: 2px;
}
.param-row input[type=range]::-webkit-slider-runnable-track {
    height: 5px;
    background-color: #dfdfdf;
}
.param-row input[type=range]::-webkit-slider-thumb {
    appearance: none;
    width: 13px;
    height: 24px;
    margin-top: -10px;
    border: 1px solid #d0d0d0;
    background-color: #f8f8f8;
}

/* Workspace */
.workspace {
    flex: 1;
    min-height: 0;
    display: grid;
    grid-template-columns: 362px 1fr 362px;
    gap: 5px;
    padding: 0 5px;
}
.dock {
    display: flex;
    flex-direction: column;
    gap: 5px;
    min-height: 0;
    padding-top: 4px;
}
.panel {
    border: 1px solid #d2d2d2;
    display: flex;
    flex-direction: column;
    min-height: 0;
}
.resources, .settings {
    flex: 1;
}
.preview {
    height: 193px;
}
.panel-head {
    display: flex;
    align-items: center;
    height: 25px;
    flex-shrink: 0;
    padding: 0 2px 0 6px;
    border-bottom: 1px solid #d2d2d2;
}
.panel-head h2 {
    flex: 1;
    font-size: 14px;
}
.panel-head button {
    display: flex;
    width: 18px;
    justify-content: center;
}
.arr {
    width: 8px;
    height: 5px;
}
.pin {
    width: 9px;
    height: 13px;
}
.x {
    width: 10px;
    height: 10px;
}
.toolbar {
    display: flex;
    align-items: center;
    height: 26px;
    flex-shrink: 0;
    border-bottom: 1px solid #d2d2d2;
}
.toolbar button {
    display: flex;
    align-items: center;
    justify-content: center;
    width: 23px;
}
.toolbar svg {
    width: 16px;
    height: 16px;
}
.toolbar .wide {
    width: 29px;
    gap: 2px;
}
.toolbar .caret {
    width: 6px;
    height: 4px;
}
.toolbar button:disabled svg {
    filter: grayscale(1);
    opacity: 0.6;
}
.sep {
    width: 1px;
    height: 22px;
    margin: 0 2px;
    background-color: #cfcfcf;
}

/* Trees */
.scroll-area {
    display: flex;
    padding-right: 2px;
}
.tree {
    flex: 1;
    min-width: 0;
    list-style: none;
    overflow: hidden;
    background-color: white;
    border-right: 1px solid white;
    color: black;
    font-family: "DejaVu Sans Condensed", "DejaVu Sans", sans-serif;
    font-size: 13px;
}
.tree li {
    display: flex;
    align-items: center;
    height: 21px;
    white-space: nowrap;
}
.exp {
    width: 9px;
    height: 9px;
    margin-right: 7px;
    flex-shrink: 0;
}
.ico {
    width: 16px;
    height: 16px;
    margin-right: 6px;
    flex-shrink: 0;
}
.l0 {
    padding-left: 7px;
}
.l1 {
    padding-left: 26px;
}
.l2 {
    padding-left: 61px;
}
.o0 {
    padding-left: 26px;
}
.o1 {
    padding-left: 42px;
}
.tree .current {
    background-color: #efefef;
}
.tree .off {
    color: #8c8c8c;
}
.resources .scroll-area {
    height: 371px;
}
.vscroll {
    width: 19px;
    display: flex;
    flex-direction: column;
    background-color: #efefef;
}
.vscroll button {
    height: 21px;
}
.vscroll svg {
    width: 12px;
    height: 8px;
}
.track {
    flex: 1;
    display: flex;
    flex-direction: column;
}
.thumb {
    background-color: #cdcdcd;
}
.thumb-res {
    height: 50%;
}
.thumb-obj {
    height: 91%;
    margin-top: auto;
}
.thumb-set {
    height: 100%;
}
.objects .tree {
    padding-bottom: 2px;
}
.hscroll {
    display: flex;
    height: 21px;
    padding: 1px 22px 1px 0;
}
.hscroll button {
    width: 21px;
}
.hscroll svg {
    width: 8px;
    height: 12px;
}
.hscroll .thumb {
    width: 83%;
    height: 100%;
}
.breadcrumbs {
    display: flex;
    align-items: center;
    height: 27px;
    margin-top: 5px;
    padding-left: 3px;
    border-top: 1px solid #d2d2d2;
    border-bottom: 1px solid #d2d2d2;
    font-family: "Liberation Sans", Arial, sans-serif;
    font-size: 14px;
    color: #505050;
}
.breadcrumbs .ico {
    margin-right: 10px;
}
.crumb {
    border-left: 3px solid #555;
    border-top: 3px solid transparent;
    border-bottom: 3px solid transparent;
    margin: 0 11px;
}
.file-list {
    flex: 1;
    background-color: white;
}

/* Documents */
.documents {
    display: flex;
    flex-direction: column;
    min-width: 0;
}
.doc-tabs {
    display: flex;
    align-items: flex-end;
    height: 31px;
}
.doc-tab {
    display: flex;
    align-items: center;
    gap: 14px;
    height: 26px;
    padding: 0 12px 0 8px;
    white-space: nowrap;
}
.doc-tab button {
    display: flex;
}
.doc-tab.open {
    gap: 12px;
    padding: 0 8px 0 6px;
    border: 1px solid #d2d2d2;
    border-bottom: 0;
    background-color: white;
    color: black;
}
.scene {
    position: relative;
    flex: 1;
    overflow: hidden;
    border: 1px solid #d2d2d2;
}
.floor {
    position: absolute;
    left: -3px;
    top: -17px;
    display: grid;
    grid-template-columns: repeat(21, 58px);
    grid-auto-rows: 58px;
    color: #787878;
    font: bold 29px/58px "Liberation Sans", Arial, sans-serif;
    text-align: center;
}
.floor .light {
    background-color: #929292;
    box-shadow: inset 0 0 0 1px #8a8a8a;
}
.floor .dark {
    background-color: #696969;
    box-shadow: inset 0 0 0 1px #707070;
}
.gizmo {
    position: absolute;
    left: 510px;
    top: 210px;
    font: 14px "Liberation Sans", Arial, sans-serif;
}
.drag-arrow {
    position: absolute;
    left: 170px;
    top: 420px;
    pointer-events: none;
}

/* Settings */
.subject {
    display: flex;
    justify-content: space-between;
    padding: 7px 6px 0 7px;
    color: black;
}
.subject h3 {
    font-size: 14px;
    line-height: 20px;
    font-weight: bold;
}
.subject p {
    font: 13px/24px "Liberation Sans", Arial, sans-serif;
}
.subject .ico {
    margin-top: 1px;
}
.modes {
    display: flex;
    padding: 10px 4px 0;
}
.modes button {
    display: flex;
    align-items: center;
    justify-content: center;
    width: 23px;
    height: 22px;
}
.modes .on {
    background-color: #c5c5c5;
}
.modes svg {
    width: 16px;
    height: 16px;
}
.props-area {
    flex: 1;
    min-height: 0;
    margin: 3px 3px 5px 4px;
}
.props {
    flex: 1;
    min-width: 0;
    padding-top: 2px;
    overflow: hidden;
    border-right: 1px solid white;
    color: #101010;
    font: 13px "Liberation Sans", Arial, sans-serif;
}
.props h4 {
    line-height: 21px;
    padding-left: 3px;
    background-color: #a9a9a9;
}
.rows {
    padding: 2px 0;
}
.row {
    display: grid;
    grid-template-columns: 25px 126px 6px 17px 27px 3px 1fr;
    height: 28px;
    align-items: center;
    padding-right: 2px;
}
.row > * {
    grid-row: 1;
}
.row label, .row .name {
    grid-column: 2;
}
.row i {
    grid-column: 3;
    height: 28px;
    background-color: #e0e0e0;
}
.more {
    grid-column: 1;
    width: 17px;
    height: 17px;
    margin-left: 2px;
    border: 1px solid #a8a8a8;
    line-height: 15px;
    font-size: 11px;
    background-color: #fafafa;
}
.def {
    grid-column: 5;
    width: 27px;
    height: 22px;
    flex-shrink: 0;
    border: 1px solid #a8a8a8;
    background-color: #f6f6f6;
}
.def.white {
    background-color: white;
}
.value {
    grid-column: 7;
}
.plain {
    padding-left: 3px;
}
.pair {
    display: flex;
    gap: 3px;
}
.props input[type=text] {
    width: 100%;
    min-width: 0;
    height: 22px;
    padding: 0 2px;
    border: 1px solid #d2d2d2;
    background-color: white;
    color: #101010;
    font: 13px "Liberation Sans", Arial, sans-serif;
}
.props #p-tr {
    font-size: 12px;
}
.props #p-vis {
    width: 64px;
    flex-shrink: 0;
}
.props input[type=checkbox] {
    appearance: none;
    display: grid;
    place-items: center;
    width: 16px;
    height: 16px;
    margin: 0;
    border: 1px solid #909090;
    background-color: white;
}
.props input[type=checkbox]:checked::before {
    content: "";
    width: 12px;
    height: 10px;
    background-color: #222;
    clip-path: polygon(0 50%, 15% 36%, 38% 62%, 88% 10%, 100% 24%, 38% 92%);
}
.props input[type=range] {
    width: 53px;
    height: 22px;
    margin-left: 3px;
}
.props input[type=range]::-webkit-slider-runnable-track {
    height: 2px;
    background-color: #c4c4c4;
}
.props input[type=range]::-webkit-slider-thumb {
    appearance: none;
    width: 11px;
    height: 18px;
    margin-top: -8px;
    border: 1px solid #a0a0a0;
    background-color: #fafafa;
}

/* Bottom bar */
.bottom-bar {
    height: 34px;
    padding: 5px 8px 4px;
}
.bottom-bar nav {
    display: inline-flex;
    gap: 14px;
    height: 25px;
    padding: 0 6px;
    align-items: center;
    background-color: white;
}
```
